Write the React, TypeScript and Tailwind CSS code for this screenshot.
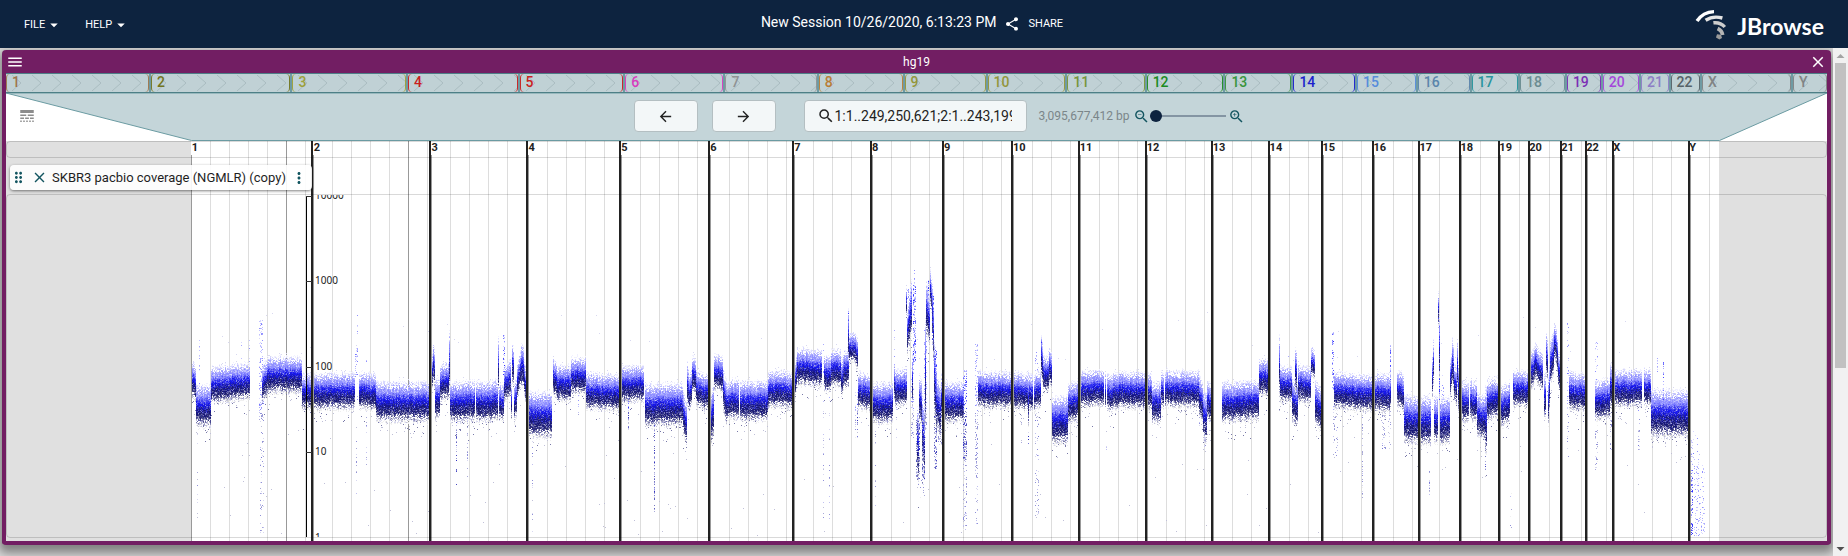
import { useMemo, useState } from "react";
import {
  MdArrowBack,
  MdArrowDropDown,
  MdArrowForward,
  MdClose,
  MdDragIndicator,
  MdLineStyle,
  MdMenu,
  MdMoreVert,
  MdSearch,
  MdShare,
  MdZoomIn,
  MdZoomOut,
} from "react-icons/md";

type Chromosome = { name: string; mb: number; x: number; color: string };

/* Name, length in megabases, left edge in the plot and label colour. */
const chromosomes: Chromosome[] = [
  { name: "1", mb: 249.25, x: 191, color: "#996633" },
  { name: "2", mb: 243.2, x: 313, color: "#666600" },
  { name: "3", mb: 198.02, x: 431, color: "#99991e" },
  { name: "4", mb: 191.15, x: 528, color: "#cc0000" },
  { name: "5", mb: 180.92, x: 621, color: "#cc0000" },
  { name: "6", mb: 171.12, x: 710, color: "#dd22bb" },
  { name: "7", mb: 159.14, x: 794, color: "#888888" },
  { name: "8", mb: 146.36, x: 872, color: "#b87019" },
  { name: "9", mb: 141.21, x: 944, color: "#8c8c1e" },
  { name: "10", mb: 135.53, x: 1013, color: "#8c8c1e" },
  { name: "11", mb: 135.01, x: 1080, color: "#6c8c1e" },
  { name: "12", mb: 133.85, x: 1147, color: "#008000" },
  { name: "13", mb: 115.17, x: 1213, color: "#228b22" },
  { name: "14", mb: 107.35, x: 1270, color: "#0000cc" },
  { name: "15", mb: 102.53, x: 1323, color: "#4480dd" },
  { name: "16", mb: 90.35, x: 1374, color: "#4a78a5" },
  { name: "17", mb: 81.2, x: 1420, color: "#0c8a94" },
  { name: "18", mb: 78.08, x: 1461, color: "#5c8086" },
  { name: "19", mb: 59.13, x: 1500, color: "#7010b0" },
  { name: "20", mb: 63.03, x: 1530, color: "#a030dc" },
  { name: "21", mb: 48.13, x: 1562, color: "#8570c4" },
  { name: "22", mb: 51.3, x: 1587, color: "#444f55" },
  { name: "X", mb: 155.27, x: 1614, color: "#777777" },
  { name: "Y", mb: 59.37, x: 1690, color: "#777777" },
];

const PLOT_LEFT = 6;
const PLOT_TOP = 141;
const PLOT_WIDTH = 1821;
const PLOT_HEIGHT = 400;
const DATA_END = 1719;

/* Coverage bands: [first x, last x, centre y at start, centre y at end, spread]. */
type Band = [number, number, number, number, number];
const bands: Band[] = [
  [191, 195, 378, 384, 1], [196, 210, 405, 405, 1.15], [211, 249, 385, 380, 1],
  [262, 266, 385, 377, 1], [267, 286, 375, 374, 1], [287, 301, 375, 375, 1],
  [302, 354, 391, 391, 1], [359, 375, 390, 392, 1], [376, 429, 401, 402, 1.1],
  [431, 432, 385, 372, 1], [433, 434, 362, 366, 1.1], [435, 439, 400, 398, 1.1],
  [440, 448, 382, 380, 1], [449, 449, 360, 360, 1.6], [450, 474, 402, 400, 1.1],
  [476, 497, 402, 400, 1.1], [498, 498, 366, 366, 1.5], [499, 503, 402, 402, 1],
  [504, 510, 383, 378, 1], [511, 511, 402, 402, 1], [512, 513, 364, 366, 1.1],
  [514, 516, 402, 396, 1.1], [517, 520, 380, 368, 1], [521, 523, 365, 365, 1.2],
  [524, 526, 376, 390, 1], [528, 551, 414, 414, 1.25], [553, 556, 376, 380, 1],
  [557, 570, 383, 383, 1], [571, 585, 375, 375, 1], [586, 619, 391, 392, 1],
  [621, 643, 384, 383, 1], [645, 682, 405, 404, 1.15], [683, 686, 412, 422, 1.2],
  [687, 688, 385, 388, 1.2], [689, 691, 392, 386, 1], [692, 695, 373, 376, 1],
  [696, 708, 388, 393, 1], [710, 713, 420, 410, 1.4], [714, 722, 371, 374, 1],
  [723, 726, 388, 402, 1.2], [727, 730, 400, 400, 1], [731, 738, 398, 400, 1.1],
  [740, 767, 401, 400, 1.1], [768, 792, 389, 389, 1], [794, 796, 385, 374, 1],
  [797, 821, 366, 368, 1], [824, 830, 373, 375, 1], [831, 840, 367, 368, 1],
  [841, 843, 377, 373, 1], [844, 848, 368, 368, 1], [848, 848, 335, 335, 1.4],
  [849, 854, 347, 347, 0.8], [855, 857, 347, 354, 0.9], [858, 869, 390, 392, 1],
  [872, 892, 403, 402, 1.1], [894, 895, 382, 388, 1], [896, 906, 388, 386, 1],
  [906, 906, 302, 302, 0.8], [907, 908, 332, 325, 1.2], [909, 911, 318, 306, 1.5],
  [912, 912, 380, 380, 1.5], [917, 918, 440, 445, 2],
  [919, 921, 398, 402, 1.3], [922, 924, 430, 440, 2], [925, 925, 370, 370, 3],
  [926, 929, 308, 320, 1.4], [930, 931, 288, 294, 1], [932, 933, 312, 330, 1.8],
  [934, 936, 375, 400, 2], [937, 940, 402, 412, 1.4], [941, 943, 396, 390, 1.3],
  [944, 963, 401, 402, 1.1], [978, 1011, 389, 390, 1], [1013, 1027, 390, 392, 1],
  [1028, 1028, 400, 400, 1.5], [1029, 1032, 392, 392, 1], [1034, 1040, 392, 388, 1],
  [1041, 1042, 355, 362, 1.2], [1043, 1048, 372, 374, 1], [1049, 1051, 366, 370, 1],
  [1052, 1067, 420, 420, 1.3], [1068, 1078, 403, 400, 1.1], [1081, 1103, 389, 388, 1],
  [1105, 1105, 390, 390, 1], [1107, 1118, 393, 390, 1], [1119, 1145, 389, 390, 1],
  [1148, 1151, 391, 391, 1], [1152, 1160, 402, 402, 1.1], [1161, 1163, 390, 390, 1],
  [1165, 1198, 388, 389, 1], [1199, 1202, 395, 402, 1.1], [1203, 1206, 415, 418, 1.4],
  [1207, 1211, 400, 402, 1.1], [1222, 1258, 402, 400, 1.1], [1259, 1268, 376, 378, 1],
  [1279, 1279, 365, 365, 1.6], [1280, 1291, 383, 385, 1], [1292, 1297, 400, 403, 1.2],
  [1295, 1296, 368, 372, 1.2], [1298, 1310, 383, 385, 1], [1311, 1314, 361, 363, 0.8],
  [1315, 1321, 402, 408, 1.2], [1334, 1349, 390, 391, 1], [1350, 1372, 391, 394, 1],
  [1374, 1390, 392, 393, 1.05], [1397, 1403, 388, 392, 1],
  [1404, 1418, 418, 420, 1.3], [1420, 1430, 420, 420, 1.3], [1432, 1433, 376, 360, 1.2],
  [1434, 1437, 418, 420, 1.3], [1438, 1438, 308, 308, 0.9], [1439, 1439, 345, 360, 1.8],
  [1440, 1449, 420, 420, 1.3], [1450, 1451, 378, 372, 1], [1452, 1453, 360, 366, 1.3],
  [1454, 1456, 382, 385, 1], [1457, 1458, 365, 385, 1.4], [1461, 1468, 400, 402, 1.1],
  [1470, 1476, 400, 401, 1.1], [1477, 1484, 415, 416, 1.2], [1485, 1486, 420, 420, 1.8],
  [1487, 1498, 400, 396, 1.1], [1500, 1509, 407, 402, 1.1], [1513, 1527, 388, 389, 1],
  [1530, 1535, 372, 362, 1], [1536, 1542, 363, 372, 1], [1544, 1545, 395, 395, 1.2],
  [1546, 1547, 352, 358, 1.1], [1548, 1549, 400, 385, 1.3], [1550, 1553, 362, 354, 1.2],
  [1554, 1555, 341, 343, 1], [1556, 1557, 348, 354, 1], [1558, 1560, 368, 378, 1],
  [1569, 1585, 391, 393, 1.05], [1595, 1609, 400, 398, 1.1], [1610, 1612, 385, 388, 1.2],
  [1615, 1641, 388, 388, 1], [1644, 1650, 387, 388, 1], [1651, 1688, 413, 413, 1.3],
];

/* Sparse columns: [first x, last x, top y, bottom y, density]. */
const streaks: Band[] = [
  [259, 262, 320, 420, 0.3], [260, 263, 400, 533, 0.12], [199, 199, 340, 385, 0.3],
  [241, 241, 330, 370, 0.12], [249, 249, 340, 370, 0.25], [355, 356, 345, 380, 0.3],
  [357, 357, 315, 400, 0.2], [366, 366, 360, 380, 0.3], [366, 366, 410, 470, 0.15],
  [356, 356, 410, 495, 0.12], [503, 504, 335, 375, 0.4], [456, 456, 420, 485, 0.4],
  [467, 467, 420, 485, 0.15], [191, 191, 400, 520, 0.1], [197, 197, 430, 520, 0.14],
  [532, 532, 440, 538, 0.12], [578, 578, 385, 415, 0.3], [654, 654, 420, 513, 0.6],
  [628, 628, 395, 430, 0.5], [823, 823, 330, 520, 0.12], [829, 829, 380, 520, 0.15],
  [848, 848, 308, 340, 0.4], [855, 855, 390, 438, 0.25], [857, 857, 390, 438, 0.45],
  [872, 872, 420, 475, 0.3], [875, 875, 430, 525, 0.14], [896, 896, 400, 440, 0.25],
  [894, 894, 330, 380, 0.15], [907, 908, 285, 300, 0.3], [910, 911, 292, 320, 0.5],
  [913, 915, 285, 365, 0.5], [914, 914, 270, 290, 0.3], [911, 913, 360, 440, 0.32],
  [916, 919, 420, 480, 0.5], [922, 924, 420, 480, 0.5], [917, 924, 480, 500, 0.06],
  [924, 926, 330, 430, 0.3], [928, 928, 280, 300, 0.4], [932, 933, 295, 350, 0.4],
  [934, 936, 350, 470, 0.4], [938, 941, 400, 445, 0.35], [963, 966, 370, 460, 0.45],
  [963, 966, 440, 535, 0.22], [975, 977, 340, 480, 0.29], [975, 977, 480, 525, 0.15],
  [1021, 1021, 400, 460, 0.15], [1028, 1028, 400, 445, 0.4], [1035, 1038, 380, 520, 0.14],
  [1035, 1037, 350, 380, 0.15], [1041, 1041, 338, 360, 0.4], [1106, 1106, 400, 450, 0.14],
  [1199, 1199, 400, 430, 0.3], [1204, 1205, 420, 450, 0.3], [1279, 1279, 340, 370, 0.35],
  [1288, 1288, 355, 380, 0.3], [1332, 1333, 332, 390, 0.4], [1333, 1337, 390, 460, 0.1],
  [1362, 1362, 415, 500, 0.35], [1381, 1385, 400, 450, 0.15], [1390, 1390, 345, 390, 0.6],
  [1388, 1390, 400, 450, 0.15], [1429, 1429, 470, 495, 0.35], [1438, 1438, 300, 320, 0.7],
  [1439, 1439, 325, 400, 0.6], [1441, 1443, 375, 400, 0.15], [1485, 1485, 430, 472, 0.5],
  [1510, 1511, 475, 537, 0.07], [1545, 1545, 395, 415, 0.4], [1567, 1568, 320, 465, 0.14],
  [1595, 1597, 340, 380, 0.15], [1595, 1597, 410, 470, 0.16], [1638, 1639, 410, 450, 0.15],
  [1657, 1657, 358, 400, 0.35], [1663, 1663, 362, 400, 0.5], [1691, 1692, 470, 536, 0.4],
  [1691, 1692, 440, 470, 0.15], [1694, 1704, 465, 536, 0.14], [1693, 1699, 430, 480, 0.05],
  [1610, 1611, 410, 450, 0.15],
];

function createRandom(seed: number) {
  let state = seed;
  return () => {
    state = (state + 0x6d2b79f5) | 0;
    let t = Math.imul(state ^ (state >>> 15), 1 | state);
    t = (t + Math.imul(t ^ (t >>> 7), 61 | t)) ^ t;
    return ((t ^ (t >>> 14)) >>> 0) / 4294967296;
  };
}

type Layer = { offset: number; spread: number; amount: number; rgb: [number, number, number] };
const layers: Layer[] = [
  { offset: -8, spread: 4.4, amount: 2.6, rgb: [150, 150, 255] },
  { offset: 0.5, spread: 3.5, amount: 2.8, rgb: [26, 26, 250] },
  { offset: 8, spread: 4.2, amount: 1.9, rgb: [20, 20, 110] },
];

/* Collects one path per quantised colour, each made of one-pixel cells. */
function buildCoverage() {
  const random = createRandom(19);
  const paths = new Map<string, string[]>();
  const add = (x: number, y: number, rgb: number[]) => {
    const key = rgb.map((c) => Math.min(255, Math.round(c / 24) * 24)).join(",");
    const list = paths.get(key) ?? [];
    list.push(`M${x} ${y}h1v1h-1z`);
    paths.set(key, list);
  };

  for (const [x0, x1, c0, c1, spread] of bands) {
    for (let x = x0; x <= x1; x++) {
      const t = x1 === x0 ? 0 : (x - x0) / (x1 - x0);
      const centre = c0 + (c1 - c0) * t + (random() - 0.5) * 3;
      for (let y = Math.floor(centre - 24 * spread); y < centre + 24 * spread; y++) {
        const u = (y - centre) / spread;
        let rgb = [255, 255, 255];
        for (const layer of layers) {
          const d = (u - layer.offset) / layer.spread;
          const density = layer.amount * Math.exp(-(d * d) / 2);
          const alpha = 1 - Math.exp(-density * (0.15 + random() * 1.7));
          rgb = rgb.map((c, i) => c + (layer.rgb[i] - c) * alpha);
        }
        if (Math.abs(u) > 12 && random() < 0.35) continue;
        if (rgb[0] < 243) add(x, y, rgb);
      }
      const below = Math.floor(random() * 3 * spread);
      for (let i = 0; i < below; i++) {
        const y = Math.round(centre + spread * (13 + random() * random() * 26));
        add(x, y, random() < 0.4 ? [110, 110, 170] : [192, 192, 224]);
      }
      if (random() < 0.3) add(x, Math.round(centre - spread * (13 + random() * 9)), [216, 216, 250]);
      if (random() < 0.07) add(x, Math.round(430 + random() * 105), [190, 190, 226]);
    }
  }
  for (const [x0, x1, top, bottom, density] of streaks) {
    const darkest = density > 0.35 ? 50 : 130;
    for (let x = x0; x <= x1; x++) {
      for (let y = top; y < bottom; y++) {
        if (random() < density) {
          const low = y > 410 && x < 1690;
          const shade = darkest + random() * (232 - darkest);
          add(x, y, low ? [shade, shade, 165 + shade / 3] : [shade, shade, 255]);
        }
      }
    }
  }
  for (let i = 0; i < 50; i++) {
    const x = Math.round(195 + random() * 1490);
    add(x, Math.round(310 + random() * 50), [224, 224, 250]);
  }
  return [...paths].map(([key, list]) => ({ key, d: list.join("") }));
}

function MenuButton({ label }: { label: string }) {
  return (
    <button type="button" className="flex items-center text-[11px] leading-5 uppercase">
      {label}
      <MdArrowDropDown className="size-[18px]" />
    </button>
  );
}

function Logo() {
  return (
    <a href="#home" className="flex items-center gap-2.5 text-white">
      <svg viewBox="0 0 32 32" className="size-8" fill="none">
        <path d="M2 13 Q8 4 19 3.6" stroke="#ffffff" strokeWidth="3.4" />
        <path d="M10.6 12.2 Q18 7.4 27.4 10" stroke="#e4e4e4" strokeWidth="3.4" />
        <path d="M18.4 14.8 Q25.4 14 29.8 19" stroke="#cccccc" strokeWidth="3.4" />
        <path d="M22.6 20.4 Q27 22.4 27.6 27" stroke="#b4b4b4" strokeWidth="3.8" />
        <path d="M22 26.2l4 .6l1 3.2l-2.6 1.4l-3.4-2z" fill="#9a9a9a" />
      </svg>
      <span className="pt-1 font-['Lato'] text-[23px] leading-8 font-bold">JBrowse</span>
    </a>
  );
}

function AppHeader() {
  return (
    <header className="grid h-12 grid-cols-[1fr_auto_1fr] items-center bg-[#0d233f] px-6 text-white">
      <nav className="flex gap-5.5 pt-0.5">
        <MenuButton label="File" />
        <MenuButton label="Help" />
      </nav>
      <div className="flex items-center gap-2 pr-6">
        <h1 className="pb-1 text-[14px] leading-5">New Session 10/26/2020, 6:13:23 PM</h1>
        <button type="button" className="flex items-center gap-2 text-[11px] leading-5 uppercase">
          <MdShare className="size-4" />
          Share
        </button>
      </div>
      <div className="flex justify-end">
        <Logo />
      </div>
    </header>
  );
}

function Overview() {
  return (
    <div className="flex h-5 gap-0.5 border-y border-[#4d7f86] bg-[#6f9ba3]">
      {chromosomes.map((c) => (
        <div key={c.name} className="relative min-w-0 basis-0 bg-[#c0d1d5]" style={{ flexGrow: c.mb }}>
          <svg className="absolute inset-0 h-full w-full" fill="none" aria-hidden="true">
            <defs>
              <pattern id={`arrows-${c.name}`} x="-4" width="20" height="18" patternUnits="userSpaceOnUse">
                <path d="M10 1l9 8l-9 8" stroke="#a9bcc0" />
              </pattern>
            </defs>
            <rect width="100%" height="100%" fill={`url(#arrows-${c.name})`} />
          </svg>
          <div className="absolute inset-0 rounded-[4px] border-x opacity-80" style={{ borderColor: c.color }} />
          <span
            className="relative block pl-1.5 text-[14px] leading-4 font-medium opacity-85"
            style={{ color: c.color }}
          >
            {c.name}
          </span>
        </div>
      ))}
    </div>
  );
}

function Controls() {
  const [zoom, setZoom] = useState(0);
  const [location, setLocation] = useState("1:1..249,250,621;2:1..243,199,373;3:1..198,022,430");
  const box = "border border-[#b4bfc2] bg-[#f3f7f8] rounded-[4px]";
  return (
    <div className="relative h-12">
      <svg
        viewBox="0 0 1821 48"
        preserveAspectRatio="none"
        className="absolute inset-0 h-full w-full"
        aria-hidden="true"
      >
        <path d="M0 0H1821L1713.5 47.5H185.5z" fill="#c4d5d9" stroke="#6b9ba2" />
      </svg>
      <div className="relative flex h-full items-center pb-0.5">
        <button type="button" aria-label="Open track selector" className="pl-3 text-[#8c8c8c]">
          <MdLineStyle className="size-[18px]" />
        </button>
        <div className="flex flex-1 items-center justify-center pl-4">
          <button type="button" aria-label="Scroll left" className={`flex h-8 w-16 items-center justify-center ${box}`}>
            <MdArrowBack className="size-[17px]" />
          </button>
          <button
            type="button"
            aria-label="Scroll right"
            className={`ml-3.5 flex h-8 w-16 items-center justify-center ${box}`}
          >
            <MdArrowForward className="size-[17px]" />
          </button>
          <label className={`ml-7 flex h-8 w-[223px] items-center pr-3.5 pl-3 ${box}`}>
            <MdSearch className="size-[18px] shrink-0" />
            <input
              aria-label="Location"
              value={location}
              onChange={(e) => setLocation(e.target.value)}
              className="w-full min-w-0 bg-transparent text-[14px] leading-5 outline-none"
            />
          </label>
          <span className="ml-3 text-[12px] leading-5 text-[#7b8689]">3,095,677,412 bp</span>
          <button type="button" aria-label="Zoom out" className="ml-1 text-[#135560]">
            <MdZoomOut className="size-[17px]" />
          </button>
          <input
            type="range"
            aria-label="Zoom"
            min={0}
            max={100}
            value={zoom}
            onChange={(e) => setZoom(Number(e.target.value))}
            className="m-0 h-3 w-[76px] appearance-none bg-transparent bg-linear-to-r from-[#8495a3] to-[#8495a3] bg-size-[100%_2px] bg-center bg-no-repeat [&::-webkit-slider-thumb]:size-3 [&::-webkit-slider-thumb]:appearance-none [&::-webkit-slider-thumb]:rounded-full [&::-webkit-slider-thumb]:bg-[#0d233f]"
          />
          <button type="button" aria-label="Zoom in" className="ml-0.5 text-[#135560]">
            <MdZoomIn className="size-[17px]" />
          </button>
        </div>
      </div>
    </div>
  );
}

function PlotLayer() {
  const coverage = useMemo(buildCoverage, []);
  const bottom = PLOT_TOP + PLOT_HEIGHT;
  const lines = chromosomes.flatMap((c, i) => {
    const end = i + 1 < chromosomes.length ? chromosomes[i + 1].x - 3 : DATA_END;
    const result: { x: number; major: boolean }[] = [];
    for (let k = 1; c.x + k * 19.15 < end; k++) {
      result.push({ x: Math.floor(c.x + k * 19.15), major: k % 5 === 0 });
    }
    return result;
  });
  return (
    <svg
      viewBox={`${PLOT_LEFT} ${PLOT_TOP} ${PLOT_WIDTH} ${PLOT_HEIGHT}`}
      preserveAspectRatio="none"
      shapeRendering="crispEdges"
      className="absolute inset-0 h-full w-full"
      role="img"
      aria-label="Coverage by chromosome"
    >
      <rect x={PLOT_LEFT} y={PLOT_TOP} width={191 - PLOT_LEFT} height={PLOT_HEIGHT} fill="#e0e0e0" />
      <rect x={DATA_END} y={PLOT_TOP} width={1827 - DATA_END} height={PLOT_HEIGHT} fill="#e0e0e0" />
      {lines.map((l) => (
        <rect key={l.x} x={l.x} y={PLOT_TOP} width="1" height={PLOT_HEIGHT} fill={l.major ? "#999999" : "#dddddd"} />
      ))}
      {coverage.map((p) => (
        <path key={p.key} d={p.d} fill={`rgb(${p.key})`} />
      ))}
      {chromosomes.map((c, i) => (
        <g key={c.name}>
          <rect x={c.x} y={155} width="1" height={bottom - 155} fill="#999999" />
          {i > 0 && <rect x={c.x - 2} y={PLOT_TOP} width="2" height={PLOT_HEIGHT} fill="#222222" />}
        </g>
      ))}
    </svg>
  );
}

const axisTicks = [
  { y: 1, label: "10000" },
  { y: 86, label: "1000" },
  { y: 172, label: "100" },
  { y: 257, label: "10" },
  { y: 343, label: "1" },
];

function Axis() {
  return (
    <svg className="absolute top-0 left-[299px] h-full w-16 font-['Noto_Sans']" aria-hidden="true">
      <path d="M5 1.5H.5V343" fill="none" stroke="#000000" />
      {axisTicks.map((t) => (
        <g key={t.label}>
          <rect x="0" y={t.y} width="6" height="1" fill="#333333" />
          <text x="9" y={t.y + 3} fontSize="10" fill="#222222">
            {t.label}
          </text>
        </g>
      ))}
    </svg>
  );
}

function TrackLabel() {
  return (
    <div className="absolute top-6 left-1 flex h-[25px] items-center rounded-[4px] bg-white/90 pr-1 shadow-[0_1px_3px_rgba(0,0,0,0.5)]">
      <MdDragIndicator className="size-[17px] text-[#135560]" />
      <button type="button" aria-label="Close track" className="ml-1 text-[#135560]">
        <MdClose className="size-[17px]" />
      </button>
      <span className="ml-1 text-[13px] leading-5 whitespace-nowrap text-[#1f1f1f]">
        SKBR3 pacbio coverage (NGMLR) (copy)
      </span>
      <button type="button" aria-label="Track menu" className="ml-1 text-[#135560]">
        <MdMoreVert className="size-[18px]" />
      </button>
    </div>
  );
}

function Plot() {
  return (
    <div className="relative bg-white pb-[3px]">
      <PlotLayer />
      <div className="relative flex h-[17px] rounded-[4px] border border-black/15">
        <div className="basis-0" style={{ flexGrow: 191 - PLOT_LEFT }} />
        {chromosomes.map((c, i) => {
          const end = i + 1 < chromosomes.length ? chromosomes[i + 1].x : DATA_END;
          return (
            <div
              key={c.name}
              className="min-w-0 basis-0 text-[11px] leading-3 font-bold whitespace-nowrap text-[#222222]"
              style={{ flexGrow: end - c.x }}
            >
              {c.name}
            </div>
          );
        })}
        <div className="basis-0" style={{ flexGrow: 1827 - DATA_END }} />
      </div>
      <div className="relative mt-9 h-[344px] rounded-[4px] border border-black/15">
        <Axis />
      </div>
      <TrackLabel />
    </div>
  );
}

function GenomeView() {
  return (
    <section className="overflow-hidden rounded-[4px] border-x-4 border-b-4 border-[#721e63] bg-white shadow-[0_5px_10px_3px_rgba(0,0,0,0.4)]">
      <div className="flex h-[23px] items-center bg-[#721e63] text-white">
        <button type="button" aria-label="View menu">
          <MdMenu className="size-[18px]" />
        </button>
        <h2 className="flex-1 text-center text-[12px] leading-5">hg19</h2>
        <button type="button" aria-label="Close view">
          <MdClose className="size-[18px]" />
        </button>
      </div>
      <Overview />
      <Controls />
      <Plot />
    </section>
  );
}

function Scrollbar() {
  return (
    <div className="flex w-[15px] shrink-0 flex-col items-center bg-[#f1f1f1]" aria-hidden="true">
      <svg viewBox="0 0 15 15" className="size-[15px]">
        <path d="M3.5 10L7.5 6l4 4z" fill="#a3a3a3" />
      </svg>
      <div className="w-[11px] flex-[305] bg-[#c1c1c1]" />
      <div className="flex-[173]" />
      <svg viewBox="0 0 15 15" className="size-[15px]">
        <path d="M3.5 6l4 4l4-4z" fill="#505050" />
      </svg>
    </div>
  );
}

export default function App() {
  return (
    <div className="flex min-h-screen flex-col font-['Roboto',sans-serif] text-[#222222]">
      <AppHeader />
      <div className="flex flex-1">
        <main className="min-w-0 flex-1 overflow-hidden bg-[#d8d8d8] px-0.5 pt-0.5 pb-[11px]">
          <GenomeView />
        </main>
        <Scrollbar />
      </div>
    </div>
  );
}
